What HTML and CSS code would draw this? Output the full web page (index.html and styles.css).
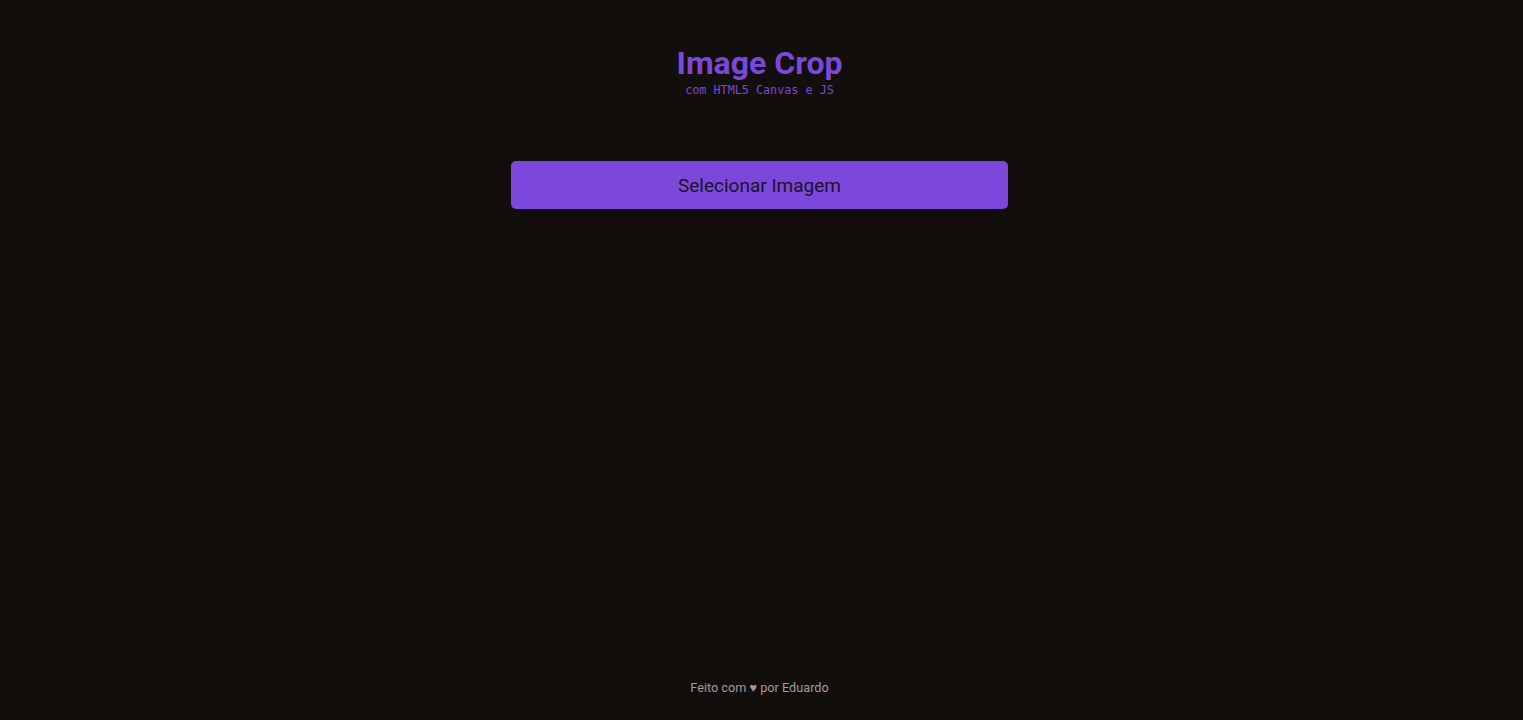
FILE: index.html
```html
<!DOCTYPE html>
<html lang="pt-BR">
<head>
<meta charset="utf-8">
<title>Image Crop</title>
<link rel="stylesheet" href="styles.css">
</head>
<body>
<div class="page">
  <header class="header">
    <h1 class="title">Image Crop</h1>
    <p class="subtitle">com HTML5 Canvas e JS</p>
  </header>
  <main class="main">
    <button class="select-btn" type="button">Selecionar Imagem</button>
  </main>
  <footer class="footer">Feito com ♥ por Eduardo</footer>
</div>
</body>
</html>
```

FILE: styles.css
```css
* { box-sizing: border-box; }
html, body {
  margin: 0;
  padding: 0;
  height: 100%;
  background: #120e0c;
}
body {
  font-family: Roboto, "Liberation Sans", sans-serif;
  overflow: hidden;
}
.page {
  width: calc(100% - 4px);
  height: 720px;
  display: flex;
  flex-direction: column;
  align-items: center;
}
.header {
  display: flex;
  flex-direction: column;
  align-items: center;
  padding-top: 44px;
}
.title {
  margin: 0;
  font-size: 32px;
  font-weight: 700;
  line-height: 39px;
  color: #7b48d9;
}
.subtitle {
  margin: 0;
  font-family: "DejaVu Sans Mono", "Liberation Mono", monospace;
  font-size: 11.75px;
  line-height: 14px;
  color: #7b48d9;
}
.main {
  flex: 1;
  padding-top: 64px;
  display: flex;
  flex-direction: column;
  align-items: center;
}
.select-btn {
  width: 497px;
  height: 48px;
  border: none;
  border-radius: 5px;
  background: #7c48db;
  color: #1c1226;
  font-family: Roboto, "Liberation Sans", sans-serif;
  font-size: 19px;
  cursor: pointer;
}
.footer {
  padding-bottom: 24px;
  font-size: 12.7px;
  line-height: 16px;
  color: #a19b99;
}
```
